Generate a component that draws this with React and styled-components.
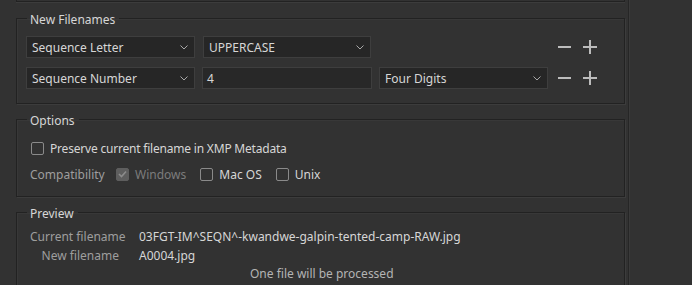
import React from "react";
import styled, { createGlobalStyle } from "styled-components";

const Global = createGlobalStyle`
  html, body { margin: 0; padding: 0; background: #323232; }
  body { font-family: "Noto Sans", "Open Sans", sans-serif; font-size: 12px; color: #d4d4d4; }
  * { box-sizing: border-box; }
`;

const Page = styled.div`
  display: flex;
  width: 692px;
  height: 285px;
  overflow: hidden;
  background: #323232;
`;

const Column = styled.div`
  width: 629px;
  flex: none;
  padding-left: 16px;
  padding-right: 3px;
  border-right: 1px solid #262626;
  box-shadow: 1px 0 0 #3a3a3a;
  display: flex;
  flex-direction: column;
`;

const PrevPanelEdge = styled.div`
  height: 2px;
  flex: none;
  border: 1px solid #222;
  border-top: none;
  box-shadow: 0 1px 0 #3c3c3c;
  margin-bottom: 6px;
`;

const Panel = styled.fieldset`
  margin: 0 0 ${(p) => p.$gap || 0}px 0;
  padding: 0;
  border: 1px solid #222;
  box-shadow: 1px 1px 0 #3c3c3c, inset 1px 1px 0 #383838;
  min-width: 0;
  flex: none;
`;

const Legend = styled.legend`
  margin-left: 10px;
  padding: 4px 4px 0 3px;
  height: 20px;
  line-height: 16px;
  font-size: 12px;
  color: #d6d6d6;
`;

const Body = styled.div`
  padding: ${(p) => p.$pad};
  display: flex;
  flex-direction: column;
  gap: ${(p) => p.$gap}px;
`;

const Row = styled.div`
  display: flex;
  align-items: center;
  height: 22px;
  gap: ${(p) => p.$gap || 8}px;
`;

const Select = styled.div`
  width: ${(p) => p.$w}px;
  height: 22px;
  display: flex;
  align-items: center;
  justify-content: space-between;
  padding: 0 6px 0 5px;
  background: #262626;
  border: 1px solid #3e3e3e;
  color: #d6d6d6;
  font-size: 12px;
`;

const Input = styled.div`
  width: ${(p) => p.$w}px;
  height: 22px;
  display: flex;
  align-items: center;
  padding: 0 4px;
  background: #282828;
  border: 1px solid #3e3e3e;
  color: #d6d6d6;
`;

const Chevron = () => (
  <svg width="8" height="5" viewBox="0 0 8 5">
    <path d="M0.5 0.5 L4 4 L7.5 0.5" fill="none" stroke="#a8a8a8" strokeWidth="1" />
  </svg>
);

const IconBtns = styled.div`
  margin-left: auto;
  margin-right: 27px;
  display: flex;
  gap: 12px;
  align-items: center;
`;

const IconBtn = styled.button`
  width: 14px;
  height: 14px;
  padding: 0;
  border: none;
  background: transparent;
  display: flex;
  align-items: center;
  justify-content: center;
`;

const Minus = () => (
  <svg width="13" height="14" viewBox="0 0 13 14">
    <rect x="0" y="6" width="13" height="2" fill="#bcbcbc" />
  </svg>
);
const Plus = () => (
  <svg width="14" height="14" viewBox="0 0 14 14">
    <rect x="0" y="6" width="14" height="2" fill="#bcbcbc" />
    <rect x="6" y="0" width="2" height="14" fill="#bcbcbc" />
  </svg>
);

const CheckRow = styled.label`
  display: flex;
  align-items: center;
  gap: 6px;
  height: 16px;
  white-space: nowrap;
  letter-spacing: ${(p) => p.$ls || 0}px;
  color: ${(p) => (p.$disabled ? "#7c7c7c" : "#d6d6d6")};
  margin-right: ${(p) => p.$mr || 0}px;
  margin-left: ${(p) => p.$ml || 0}px;
`;

const Box = styled.span`
  width: 13px;
  height: 13px;
  flex: none;
  border: 1px solid ${(p) => (p.$checked ? "#5e5e5e" : "#8a8a8a")};
  background: ${(p) => (p.$checked ? "#5e5e5e" : "transparent")};
  border-radius: 2px;
  display: flex;
  align-items: center;
  justify-content: center;
`;

const Check = () => (
  <svg width="9" height="8" viewBox="0 0 9 8">
    <path d="M1 4 L3.5 6.5 L8 1.5" fill="none" stroke="#8c8c8c" strokeWidth="1.6" />
  </svg>
);

const Label = styled.span`
  color: #9e9e9e;
  width: ${(p) => p.$w}px;
  flex: none;
  white-space: nowrap;
  text-align: ${(p) => p.$align || "left"};
`;

const InlineRow = styled.div`
  display: flex;
  align-items: center;
  height: 16px;
  white-space: nowrap;
  gap: ${(p) => p.$gap || 0}px;
`;

const Value = styled.span`
  color: #d6d6d6;
`;

const Note = styled.div`
  color: #b4b4b4;
  padding-left: 220px;
  height: 16px;
  line-height: 16px;
`;

function Checkbox({ children, checked, disabled, mr, ml, ls }) {
  return (
    <CheckRow $disabled={disabled} $mr={mr} $ml={ml} $ls={ls}>
      <Box $checked={checked}>{checked && <Check />}</Box>
      {children}
    </CheckRow>
  );
}

export default function App() {
  return (
    <Page>
      <Global />
      <Column>
        <PrevPanelEdge />
        <Panel $gap={5}>
          <Legend>New Filenames</Legend>
          <Body $pad="8px 0 14px 9px" $gap={9}>
            <Row>
              <Select $w={169}>Sequence Letter<Chevron /></Select>
              <Select $w={168}>UPPERCASE<Chevron /></Select>
              <IconBtns>
                <IconBtn aria-label="remove"><Minus /></IconBtn>
                <IconBtn aria-label="add"><Plus /></IconBtn>
              </IconBtns>
            </Row>
            <Row $gap={7}>
              <Select $w={169}>Sequence Number<Chevron /></Select>
              <Input $w={170}>4</Input>
              <Select $w={169}>Four Digits<Chevron /></Select>
              <IconBtns>
                <IconBtn aria-label="remove"><Minus /></IconBtn>
                <IconBtn aria-label="add"><Plus /></IconBtn>
              </IconBtns>
            </Row>
          </Body>
        </Panel>
        <Panel $gap={5}>
          <Legend>Options</Legend>
          <Body $pad="11px 0 14px 13px" $gap={10}>
            <Checkbox ml={1} ls={-0.2}>Preserve current filename in XMP Metadata</Checkbox>
            <InlineRow>
              <Label $w={86}>Compatibility</Label>
              <Checkbox checked disabled mr={14}>Windows</Checkbox>
              <Checkbox mr={14}>Mac OS</Checkbox>
              <Checkbox>Unix</Checkbox>
            </InlineRow>
          </Body>
        </Panel>
        <Panel>
          <Legend>Preview</Legend>
          <Body $pad="6px 0 12px 13px" $gap={3}>
            <InlineRow $gap={20}>
              <Label $w={89} $align="right">Current filename</Label>
              <Value>03FGT-IM^SEQN^-kwandwe-galpin-tented-camp-RAW.jpg</Value>
            </InlineRow>
            <InlineRow $gap={20}>
              <Label $w={89} $align="right">New filename</Label>
              <Value>A0004.jpg</Value>
            </InlineRow>
            <Note>One file will be processed</Note>
          </Body>
        </Panel>
      </Column>
    </Page>
  );
}
